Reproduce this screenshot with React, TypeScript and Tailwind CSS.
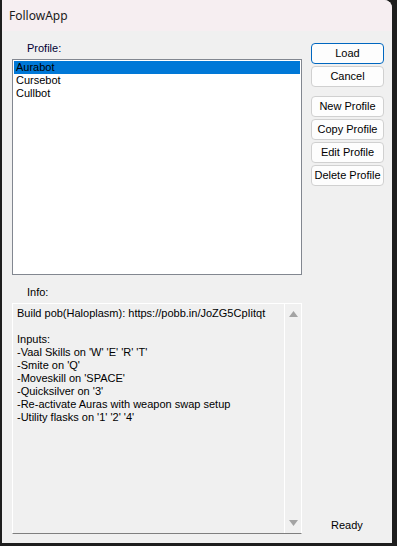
import { ReactNode } from "react";

const profiles = ["Aurabot", "Cursebot", "Cullbot"];

const info = [
  "Build pob(Haloplasm): https://pobb.in/JoZG5CpIitqt",
  "",
  "Inputs:",
  "-Vaal Skills on 'W' 'E' 'R' 'T'",
  "-Smite on 'Q'",
  "-Moveskill on 'SPACE'",
  "-Quicksilver on '3'",
  "-Re-activate Auras with weapon swap setup",
  "-Utility flasks on '1' '2' '4'",
];

function Btn({ children, primary }: { children: ReactNode; primary?: boolean }) {
  return (
    <button
      className={
        "h-[21px] w-[73px] rounded-[4px] bg-[#fdfdfd] text-[11px] leading-none text-black flex items-center justify-center " +
        (primary ? "border border-[#0067c0]" : "border border-[#d0d0d0]")
      }
    >
      {children}
    </button>
  );
}

export default function App() {
  return (
    <div className="w-[397px] h-[546px] bg-[#1e1e1e] overflow-hidden">
      <div className="ml-[2px] w-[390px] h-[543px] bg-[#f0f0f0] rounded-tr-[8px] overflow-hidden flex flex-col font-['Liberation_Sans',Arial,sans-serif] text-black">
        <div className="h-[31px] shrink-0 bg-[#f6eef1] pl-[7px] flex items-center text-[12px] font-['Noto_Sans',sans-serif] text-[#1a1a1a]">
          FollowApp
        </div>

        <div className="flex-1 flex pl-[10px]">
          <div className="w-[290px] flex flex-col">
            <div className="mt-[11px] pl-[15px] text-[11px] leading-[13px] text-[#000033]">Profile:</div>
            <div className="mt-[4px] h-[216px] border border-[#828790] bg-white p-[1px] text-[11px] leading-[13px]">
              {profiles.map((p, i) => (
                <div key={p} className={"h-[13px] pl-[2px] " + (i === 0 ? "bg-[#0078d7]" : "")}>
                  {p}
                </div>
              ))}
            </div>
            <div className="mt-[11px] pl-[15px] text-[11px] leading-[13px]">Info:</div>
            <div className="mt-[4px] h-[231px] flex border-t border-l border-r border-white border-b border-b-[#7f7f7f] bg-[#f0f0f0]">
              <div className="flex-1 pl-[4px] pt-[3px] text-[11px] leading-[13px] whitespace-pre">
                {info.map((l, i) => (
                  <div key={i} className="h-[13px]">{l || " "}</div>
                ))}
              </div>
              <div className="w-[17px] border-l border-white flex flex-col items-center justify-between py-[7px]">
                <svg width="9" height="6" viewBox="0 0 9 6">
                  <path d="M0 6 L4.5 0 L9 6 Z" fill="#a3a3a3" />
                </svg>
                <svg width="9" height="6" viewBox="0 0 9 6">
                  <path d="M0 0 L9 0 L4.5 6 Z" fill="#a3a3a3" />
                </svg>
              </div>
            </div>
          </div>

          <div className="ml-[9px] w-[73px] flex flex-col">
            <div className="mt-[12px] flex flex-col gap-[2px]">
              <Btn primary>Load</Btn>
              <Btn>Cancel</Btn>
            </div>
            <div className="mt-[9px] flex flex-col gap-[2px]">
              <Btn>New Profile</Btn>
              <Btn>Copy Profile</Btn>
              <Btn>Edit Profile</Btn>
              <Btn>Delete Profile</Btn>
            </div>
            <div className="mt-auto mb-[11px] pl-[20px] text-[11px] leading-[13px]">Ready</div>
          </div>
        </div>
      </div>
    </div>
  );
}
